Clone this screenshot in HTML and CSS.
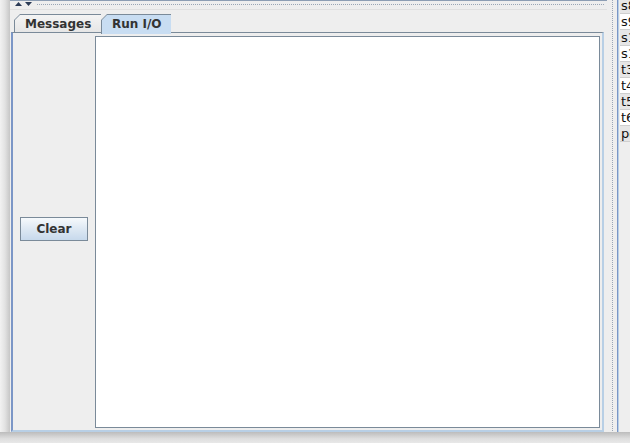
FILE: index.html
```html
<!DOCTYPE html>
<html>
<head>
<meta charset="utf-8">
<link rel="stylesheet" href="styles.css">
</head>
<body>
<div class="screen">
  <div class="frame">
    <div class="lshadow"></div>
    <div class="leftcol">
      <div class="hdivider">
        <div class="arrows">
          <svg width="20" height="6" viewBox="0 0 20 6"><polygon points="0,5 3.5,1 7,5" fill="#2b3a55"/><polygon points="10,1 17,1 13.5,5" fill="#2b3a55"/></svg>
        </div>
        <div class="hbumps"></div>
      </div>
      <div class="tabbed">
        <div class="tabrow">
          <div class="tab"><div class="tab-inner">Messages</div></div>
          <div class="tab sel"><div class="tab-inner">Run I/O</div></div>
        </div>
        <div class="content">
          <div class="sidepanel">
            <button class="btn">Clear</button>
          </div>
          <div class="textarea"></div>
        </div>
      </div>
    </div>
    <div class="vdivider"><div class="vbumps"></div></div>
    <div class="regs">
      <div class="row g first">s8</div>
      <div class="row">s9</div>
      <div class="row g">s1</div>
      <div class="row">s1</div>
      <div class="row g">t3</div>
      <div class="row">t4</div>
      <div class="row g">t5</div>
      <div class="row">t6</div>
      <div class="row g">pc</div>
    </div>
  </div>
  <div class="bshadow"></div>
</div>
</body>
</html>
```
FILE: styles.css
```css
html, body {
  margin: 0;
  padding: 0;
}
body {
  width: 630px;
  height: 443px;
  overflow: hidden;
  background: #e4e4e4;
  font-family: "DejaVu Sans", sans-serif;
}
.screen {
  display: flex;
  flex-direction: column;
  width: 630px;
  height: 443px;
}
.frame {
  display: flex;
  height: 432px;
}
.lshadow {
  width: 10px;
  background: linear-gradient(to right, #f2f2f2, #e2e2e2 50%, #c6c6c6);
}
.leftcol {
  width: 597px;
  display: flex;
  flex-direction: column;
  background: #eeeeee;
}
.hdivider {
  height: 10px;
  border-top: 1px solid #8c9db3;
  box-sizing: border-box;
  display: flex;
  align-items: center;
  background: #eeeeee;
  border-bottom: 1px solid #e0e0e0;
}
.arrows {
  width: 22px;
  padding-left: 5px;
  display: flex;
  align-items: center;
  height: 6px;
  margin-top: -2px;
}
.arrows svg { display: block; }
.hbumps {
  flex: 1;
  height: 2px;
  margin-right: 2px;
  background-image: radial-gradient(circle at 0.5px 0.5px, #9aa6b6 0.7px, transparent 0.8px);
  background-size: 2px 2px;
}
.tabbed {
  flex: 1;
  display: flex;
  flex-direction: column;
  padding-top: 4px;
}
.tabrow {
  display: flex;
  height: 19px;
  padding-left: 4px;
  position: relative;
  z-index: 1;
}
.tab {
  height: 18px;
  background: #7a8a99;
  clip-path: polygon(6px 0, 100% 0, 100% 100%, 0 100%, 0 6px);
  display: flex;
}
.tab-inner {
  flex: 1;
  margin: 1px 1px 0 1px;
  background: linear-gradient(#f4f4f4, #e6e6e6);
  clip-path: polygon(5px 0, 100% 0, 100% 100%, 0 100%, 0 5px);
  font-size: 12px;
  font-weight: bold;
  color: #333333;
  line-height: 18px;
  padding: 0 10px 0 10px;
  white-space: nowrap;
}
.tab:first-child {
  width: 87px;
}
.tab.sel {
  width: 70px;
  height: 20px;
}
.tab.sel .tab-inner {
  background: #c8ddf2;
}
.content {
  flex: 1;
  display: flex;
  border-top: 1px solid #7a8a99;
  margin-top: -1px;
  border-left: 2px solid #7b96c6;
  border-right: 2px solid #b8cfe5;
  border-bottom: 2px solid #b8cfe5;
  padding: 3px 1px 1px 0;
  margin-left: 1px;
  margin-right: 3px;
  box-sizing: border-box;
}
.sidepanel {
  width: 82px;
  display: flex;
  align-items: center;
  justify-content: center;
  padding-bottom: 8px;
  box-sizing: border-box;
}
.btn {
  width: 68px;
  height: 24px;
  border: 1px solid #7a8a99;
  background: linear-gradient(#f6f9fc, #dde8f3 50%, #c7d9ec);
  font-family: "DejaVu Sans", sans-serif;
  font-size: 12px;
  font-weight: bold;
  color: #333333;
  padding: 0;
}
.textarea {
  flex: 1;
  background: #ffffff;
  border: 1px solid #7a8a99;
  margin-right: 1px;
  margin-bottom: 1px;
}
.vdivider {
  width: 10px;
  display: flex;
  justify-content: center;
  background: #eeeeee;
}
.vbumps {
  width: 2px;
  margin-left: 1px;
  background-image: radial-gradient(circle at 0.5px 0.5px, #9aa6b6 0.7px, transparent 0.8px);
  background-size: 2px 2px;
}
.regs {
  flex: 1;
  background: #eeeeee;
  border-left: 1px solid #7b96c6;
  box-shadow: inset 1px 0 0 #b8cfe5;
  padding-left: 2px;
  overflow: hidden;
}
.row {
  height: 15px;
  border-bottom: 1px solid #cfcfcf;
  background: #ffffff;
  font-size: 13px;
  line-height: 15px;
  color: #111111;
  white-space: nowrap;
  padding-left: 1px;
}
.row.g {
  background: #e6e6e6;
}
.row.first {
  height: 13px;
  line-height: 11px;
}
.bshadow {
  flex: 1;
  background: linear-gradient(#bcbcbc, #dedede 60%, #e8e8e8);
}
```
